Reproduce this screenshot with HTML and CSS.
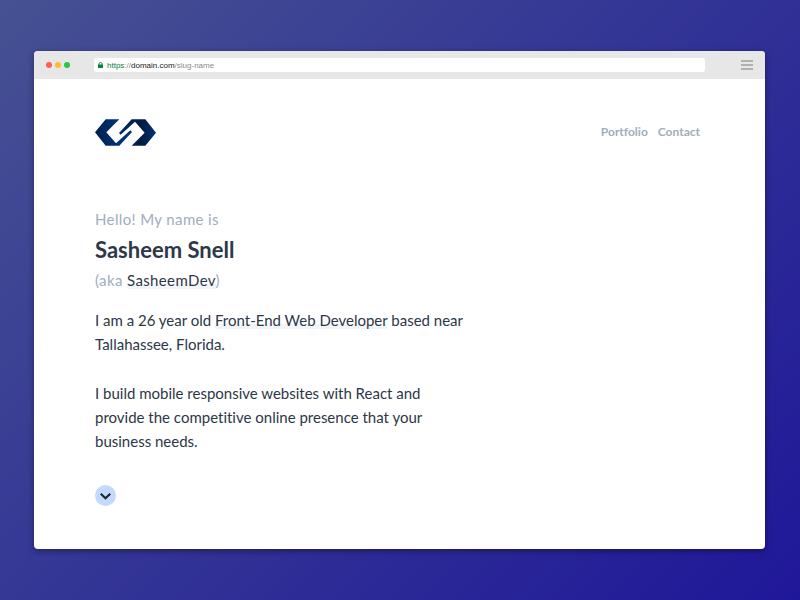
FILE: index.html
```html
<!DOCTYPE html>
<html lang="en">
<head>
<meta charset="utf-8">
<meta name="viewport" content="width=device-width, initial-scale=1">
<title>Sasheem Snell</title>
<link rel="stylesheet" href="styles.css">
</head>
<body>
<div class="window">
  <div class="toolbar">
    <div class="lights"><span class="light red"></span><span class="light yellow"></span><span class="light green"></span></div>
    <div class="address">
      <svg class="lock" viewBox="0 0 5 6" aria-hidden="true"><path d="M0 2.5h5V6H0z" fill="#0b8043"/><path d="M1 3V1.8a1.5 1.3 0 0 1 3 0V3" fill="none" stroke="#0b8043" stroke-width=".9"/></svg>
      <span class="url"><span class="scheme">https</span>://<span class="domain">domain.com</span>/slug-name</span>
    </div>
    <button class="menu" type="button" aria-label="Menu"><span></span><span></span><span></span></button>
  </div>
  <div class="page">
    <header class="header">
      <a class="logo" href="#" aria-label="Home">
        <svg viewBox="30 27 183 81" aria-hidden="true">
          <defs>
            <linearGradient id="left" x1="0" y1="0" x2="1" y2="0"><stop offset="0" stop-color="#001f4a"/><stop offset=".5" stop-color="#003070"/><stop offset="1" stop-color="#063374"/></linearGradient>
            <linearGradient id="right" x1="0" y1="0" x2="1" y2="0"><stop offset="0" stop-color="#002e6b"/><stop offset=".6" stop-color="#001a40"/><stop offset="1" stop-color="#003478"/></linearGradient>
          </defs>
          <path fill="url(#left)" d="M30 67 62 28H103L64 67 93 100 136 61 141 66 103 107H62Z"/>
          <path fill="url(#right)" d="M213 68 181 107H140L179 68 150 35 107 74 102 69 140 28H181Z"/>
        </svg>
      </a>
      <nav class="nav"><a href="#">Portfolio</a><a href="#">Contact</a></nav>
    </header>
    <main class="intro">
      <p class="lead">Hello! My name is</p>
      <h1>Sasheem Snell</h1>
      <p class="lead">(aka <span class="mark">SasheemDev</span>)</p>
      <div class="bio">
        <p>I am a 26 year old <span class="mark">Front-End Web Developer</span> based near Tallahassee, Florida.</p>
        <p>I build mobile responsive websites with React and provide the competitive online presence that your business needs.</p>
      </div>
      <button class="down" type="button" aria-label="Scroll down">
        <svg viewBox="0 0 20 20" aria-hidden="true"><path d="m5.5 8.3 4.5 4.4 4.5-4.4" fill="none" stroke="#1d2535" stroke-width="2"/></svg>
      </button>
    </main>
  </div>
</div>
</body>
</html>
```
FILE: styles.css
```css
* {
  box-sizing: border-box;
}

body {
  margin: 0;
  min-height: 100vh;
  padding: 51px 35px 51px 34px;
  display: flex;
  background: linear-gradient(135deg, #465192, #1f1799);
  font-family: Lato, Carlito, sans-serif;
  font-variant-ligatures: none;
  color: #2d3748;
}

p,
h1 {
  margin: 0;
}

a {
  color: inherit;
  text-decoration: none;
}

button {
  padding: 0;
  border: 0;
  background: none;
}

.window {
  flex: 1;
  display: flex;
  flex-direction: column;
  overflow: hidden;
  border-radius: 4px;
  background: #fff;
  box-shadow: 0 2px 6px rgba(0, 0, 0, 0.4);
}

.toolbar {
  display: flex;
  align-items: center;
  height: 28px;
  padding: 0 12px;
  background: #e7e7e7;
}

.lights {
  display: flex;
  gap: 3px;
  margin-right: 24px;
}

.light {
  width: 6px;
  height: 6px;
  border-radius: 50%;
}

.red {
  background: #ff5f57;
}

.yellow {
  background: #ffbd2e;
}

.green {
  background: #28c940;
}

.address {
  flex: 1;
  display: flex;
  align-items: center;
  gap: 4px;
  height: 14px;
  padding: 0 4px;
  border-radius: 3px;
  background: #fff;
}

.lock {
  width: 5px;
  height: 6px;
}

.url {
  padding-top: 1px;
  font: 8px/14px "Liberation Sans", sans-serif;
  color: #8a8a8a;
}

.scheme {
  color: #0b8043;
}

.domain {
  color: #222;
}

.menu {
  display: flex;
  flex-direction: column;
  gap: 2px;
  width: 12px;
  margin-left: 36px;
}

.menu span {
  height: 2px;
  background: #b1b1b1;
}

.page {
  flex: 1;
  padding: 40px 65px 40px 61px;
}

.header {
  display: flex;
  align-items: flex-start;
  justify-content: space-between;
}

.logo svg {
  display: block;
  width: 61px;
  height: 27px;
}

.nav {
  display: flex;
  gap: 10px;
  padding-top: 5px;
  font-size: 12px;
  line-height: 16px;
  font-weight: 700;
  color: #a0aec0;
}

.intro {
  max-width: 374px;
  margin-top: 61px;
}

.lead {
  font-size: 15px;
  line-height: 24px;
  letter-spacing: 0.025em;
  color: #a0aec0;
}

h1 {
  margin: 3px 0 2px;
  font-size: 22px;
  line-height: 32px;
  font-weight: 700;
}

.mark {
  color: #2d3748;
  background: linear-gradient(transparent 70%, #f2f5f8 70%);
}

.bio {
  display: flex;
  flex-direction: column;
  gap: 25px;
  margin-top: 16px;
  font-size: 15px;
  line-height: 24px;
}

.down {
  display: block;
  width: 21px;
  height: 21px;
  margin-top: 32px;
  border-radius: 50%;
  background: #c3dafe;
}

.down svg {
  display: block;
  width: 21px;
  height: 21px;
}
```
